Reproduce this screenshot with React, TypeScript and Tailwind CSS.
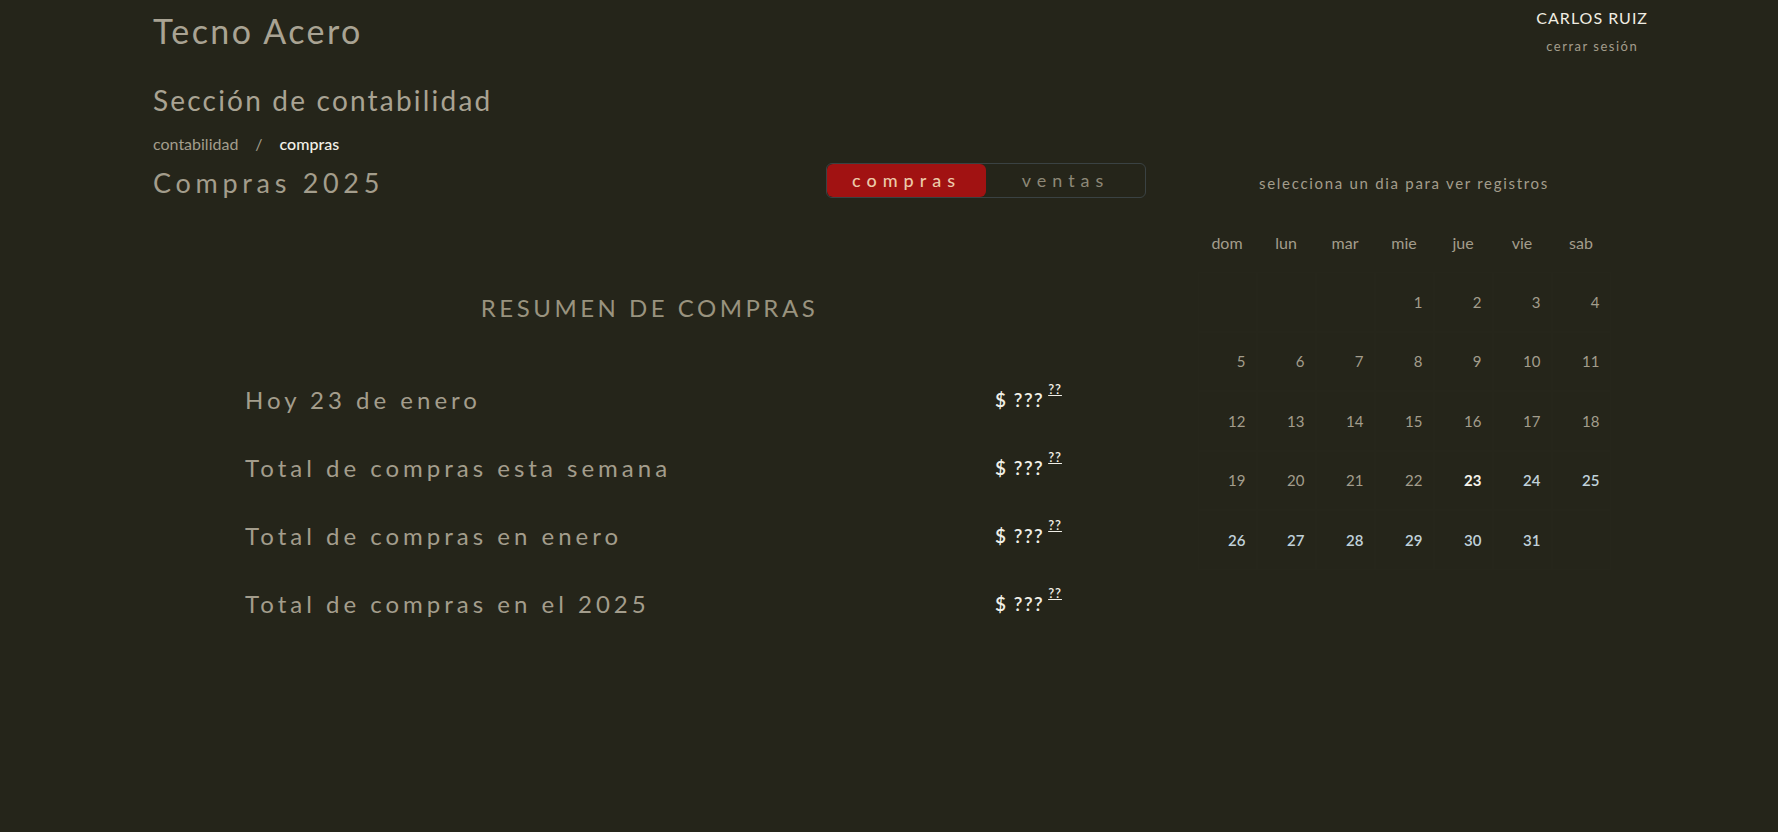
import React from "react";

const dias = ["dom", "lun", "mar", "mie", "jue", "vie", "sab"];

const resumen = [
  "Hoy 23 de enero",
  "Total de compras esta semana",
  "Total de compras en enero",
  "Total de compras en el 2025",
];

function Calendario() {
  // enero 2025 empieza en miercoles
  const celdas: (number | null)[] = [null, null, null];
  for (let d = 1; d <= 31; d++) celdas.push(d);
  while (celdas.length % 7 !== 0) celdas.push(null);

  return (
    <div className="grid grid-cols-7 w-[413px] mt-[20px]">
      {dias.map((d) => (
        <div
          key={d}
          className="h-[59px] flex items-center justify-center text-[16px] text-[#a39d8c]"
        >
          {d}
        </div>
      ))}
      {celdas.map((d, i) => {
        let color = "text-[#a39d8c]";
        if (d === 23) color = "text-[#f5f3ea] font-bold";
        else if (d && d > 23) color = "text-[#c0d2da] font-semibold";
        return (
          <div
            key={i}
            className={`h-[59.5px] flex items-center justify-end pr-[10px] text-[15px] border border-[#26261b] ${color}`}
          >
            {d ?? ""}
          </div>
        );
      })}
    </div>
  );
}

export default function App() {
  return (
    <div
      className="min-h-[832px] w-full bg-[#25251a] text-[#a39d8c]"
      style={{ fontFamily: "Lato, 'Open Sans', sans-serif" }}
    >
      <header className="flex justify-between items-start pl-[153px] pr-[130px]">
        <h1 className="text-[34px] leading-[40px] mt-[11px] tracking-[2.4px] text-[#a9a393]">
          Tecno Acero
        </h1>
        <div className="pt-[8px] flex flex-col items-center">
          <span className="text-[16px] leading-[20px] tracking-[1px] text-[#f0ede2]">
            CARLOS RUIZ
          </span>
          <span className="mt-[10px] text-[13px] leading-[16px] tracking-[1.5px] text-[#a39d8c]">
            cerrar sesión
          </span>
        </div>
      </header>

      <div className="pl-[153px]">
        <h2 className="mt-[29px] text-[28px] leading-[34px] tracking-[2.2px] text-[#a9a393]">
          Sección de contabilidad
        </h2>
        <nav className="mt-[17px] flex items-center text-[16px] leading-[20px]">
          <span className="text-[#a39d8c]">contabilidad</span>
          <span className="mx-[17px] text-[#a39d8c]">/</span>
          <span className="text-[#f3f1e8] font-medium">compras</span>
        </nav>

        <div className="mt-[9px] flex items-start">
          <section className="w-[993px]">
            <div className="flex justify-between items-center h-[34px]">
              <h3 className="text-[27px] leading-[34px] mt-[5px] tracking-[4.7px] text-[#a39d8c]">
                Compras 2025
              </h3>
              <div className="flex w-[320px] h-[35px] rounded-[6px] border border-[#3a4243] overflow-hidden">
                <button className="flex-1 bg-[#a11212] rounded-[6px] text-[18px] tracking-[6px] text-[#ecc9a9] font-medium">
                  compras
                </button>
                <button className="flex-1 text-[18px] tracking-[6px] text-[#8d8877]">
                  ventas
                </button>
              </div>
            </div>

            <h4 className="mt-[96px] text-center text-[24px] leading-[30px] tracking-[3.5px] text-[#99937f]">
              RESUMEN DE COMPRAS
            </h4>

            <div className="mt-[43px] pl-[92px]">
              {resumen.map((r) => (
                <div key={r} className="h-[68px] flex items-center">
                  <span className="w-[750px] text-[24px] tracking-[4px] text-[#a39d8c]">
                    {r}
                  </span>
                  <span className="text-[19px] font-semibold tracking-[1.5px] text-[#f0efe7] flex items-start">
                    $ ???
                    <span className="ml-[4px] text-[13px] leading-[13px] tracking-[1px] underline -mt-[3px]">
                      ??
                    </span>
                  </span>
                </div>
              ))}
            </div>
          </section>

          <aside className="ml-[51px] w-[414px] flex flex-col items-center">
            <p className="mt-[10px] text-[15px] leading-[20px] tracking-[1.7px] text-[#a39d8c]">
              selecciona un dia para ver registros
            </p>
            <Calendario />
          </aside>
        </div>
      </div>
    </div>
  );
}
